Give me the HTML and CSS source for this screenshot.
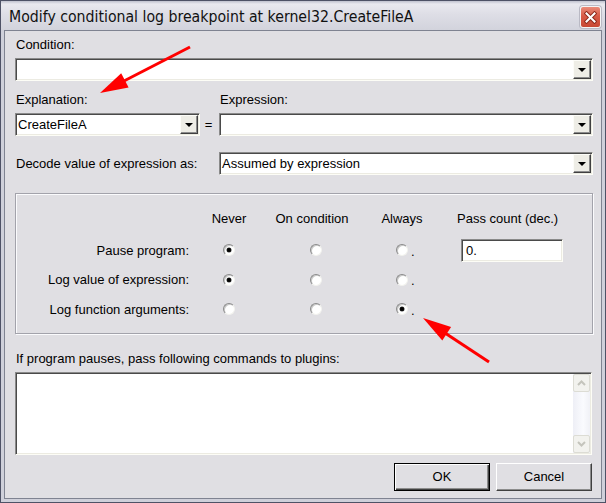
FILE: index.html
```html
<!DOCTYPE html>
<html>
<head>
<meta charset="utf-8">
<title>Modify conditional log breakpoint</title>
<link rel="stylesheet" href="styles.css">
</head>
<body>
<div class="window">
  <div class="titlebar">
    <span class="title">Modify conditional log breakpoint at kernel32.CreateFileA</span>
    <span class="close">
      <svg width="13" height="13" viewBox="0 0 13 13">
        <path d="M2.5 2.5 L10.5 10.5 M10.5 2.5 L2.5 10.5" stroke="#8c2a1c" stroke-width="4" stroke-linecap="square"/>
        <path d="M2.5 2.5 L10.5 10.5 M10.5 2.5 L2.5 10.5" stroke="#ffffff" stroke-width="2" stroke-linecap="square"/>
      </svg>
    </span>
  </div>
  <div class="client">
    <div class="label">Condition:</div>
    <div class="combo top-gap"><span class="val"></span><span class="dd"></span></div>

    <div class="pair">
      <div class="field">
        <div class="label">Explanation:</div>
        <div class="combo top-gap"><span class="val">CreateFileA</span><span class="dd"></span></div>
      </div>
      <div class="eq">=</div>
      <div class="field">
        <div class="label">Expression:</div>
        <div class="combo top-gap"><span class="val"></span><span class="dd"></span></div>
      </div>
    </div>

    <div class="decode">
      <div class="label">Decode value of expression as:</div>
      <div class="combo"><span class="val">Assumed by expression</span><span class="dd"></span></div>
    </div>

    <div class="group">
      <div class="grid">
        <div></div>
        <div class="head">Never</div>
        <div class="head">On condition</div>
        <div class="head">Always</div>
        <div class="head pass">Pass count (dec.)</div>

        <div class="rlabel">Pause program:</div>
        <div class="cell c-never"><span class="radio on"></span></div>
        <div class="cell c-cond"><span class="radio"></span></div>
        <div class="cell c-always"><span class="radio"></span><span class="dot">.</span></div>
        <div class="cell c-pass"><div class="input">0.</div></div>

        <div class="rlabel">Log value of expression:</div>
        <div class="cell c-never"><span class="radio on"></span></div>
        <div class="cell c-cond"><span class="radio"></span></div>
        <div class="cell c-always"><span class="radio"></span><span class="dot">.</span></div>
        <div></div>

        <div class="rlabel">Log function arguments:</div>
        <div class="cell c-never"><span class="radio"></span></div>
        <div class="cell c-cond"><span class="radio"></span></div>
        <div class="cell c-always"><span class="radio on"></span><span class="dot">.</span></div>
        <div></div>
      </div>
    </div>

    <div class="label plug">If program pauses, pass following commands to plugins:</div>
    <div class="textarea">
      <div class="text"></div>
      <div class="vscroll">
        <div class="sbtn"><svg width="9" height="6" viewBox="0 0 9 6"><path d="M1 5 L4.5 1.5 L8 5" fill="none" stroke="#c4c4bc" stroke-width="2"/></svg></div>
        <div class="track"></div>
        <div class="sbtn"><svg width="9" height="6" viewBox="0 0 9 6"><path d="M1 1 L4.5 4.5 L8 1" fill="none" stroke="#c4c4bc" stroke-width="2"/></svg></div>
      </div>
    </div>

    <div class="buttons">
      <div class="btn default">OK</div>
      <div class="btn">Cancel</div>
    </div>
  </div>

  <svg class="arrows" width="606" height="503" viewBox="0 0 606 503">
    <line x1="190" y1="47" x2="122" y2="82" stroke="#ff0000" stroke-width="3"/>
    <polygon points="100,93 128.6,87.5 121.2,73.3" fill="#ff0000"/>
    <line x1="489" y1="362" x2="445" y2="333" stroke="#ff0000" stroke-width="3"/>
    <polygon points="423,318 451.1,327 442.3,340.4" fill="#ff0000"/>
  </svg>
</div>
</body>
</html>
```

FILE: styles.css
```css
html, body {
  margin: 0;
  padding: 0;
  background: #ffffff;
}

.window {
  position: relative;
  width: 606px;
  height: 503px;
  box-sizing: border-box;
  border: 1px solid #4e5266;
  background: #cfd0da;
  padding: 0 3px 3px;
  display: flex;
  flex-direction: column;
  font-family: "Liberation Sans", Arial, sans-serif;
  font-size: 13px;
  color: #000;
  overflow: hidden;
}

.titlebar {
  height: 29px;
  margin: 0 -3px;
  padding: 0 4px 0 8px;
  display: flex;
  align-items: center;
  justify-content: space-between;
  background: linear-gradient(to bottom, #bfc1ce 0, #e9e9ef 3px, #dedee6 45%, #d2d3dc 100%);
}

.title {
  font-family: "DejaVu Sans Condensed", "DejaVu Sans", sans-serif;
  font-size: 15.7px;
  color: #111;
  padding-top: 2px;
}

.close {
  width: 21px;
  height: 22px;
  box-sizing: border-box;
  border: 1px solid #f4f4f4;
  border-radius: 3px;
  background: linear-gradient(to bottom, #ea8c7a 0, #d85a46 45%, #c84834 100%);
  display: flex;
  align-items: center;
  justify-content: center;
  margin-top: 3px;
  box-shadow: 0 0 0 1px #b9b9c4;
}

.client {
  flex: 1;
  border: 1px solid #7f8391;
  background: #e0dfe3;
  padding: 6px 8px 0 10px;
  display: flex;
  flex-direction: column;
}

.label {
  line-height: 15px;
  height: 15px;
  padding-left: 1px;
  white-space: nowrap;
}

.top-gap {
  margin-top: 6px;
}

.combo {
  height: 23px;
  box-sizing: border-box;
  border: 1px solid;
  border-color: #8a8a8a #fdfdf6 #fdfdf6 #8a8a8a;
  box-shadow: inset 1px 1px 0 #4a4a4a, inset -1px -1px 0 #ecebe2;
  padding: 1px;
  background: #fff;
  display: flex;
}

.val {
  flex: 1;
  line-height: 19px;
  padding-left: 1px;
  white-space: nowrap;
  overflow: hidden;
}

.dd {
  width: 18px;
  height: 19px;
  box-sizing: border-box;
  background: #eeede6;
  border: 1px solid;
  border-color: #fcfcf8 #404040 #404040 #fcfcf8;
  box-shadow: inset -1px -1px 0 #8c8c8c;
  display: flex;
  align-items: center;
  justify-content: center;
}

.dd::after {
  content: "";
  width: 0;
  height: 0;
  border-left: 4px solid transparent;
  border-right: 4px solid transparent;
  border-top: 4px solid #000;
  margin: 1px 1px 0 0;
}

.pair {
  margin-top: 11px;
  display: grid;
  grid-template-columns: 185px 19px 1fr;
}

.eq {
  align-self: end;
  height: 23px;
  line-height: 23px;
  text-align: center;
  padding-right: 2px;
}

.decode {
  margin-top: 16px;
  display: grid;
  grid-template-columns: 204px 1fr;
  align-items: center;
}

.group {
  margin-top: 18px;
  height: 141px;
  box-sizing: border-box;
  border: 1px solid #a3a3ab;
  box-shadow: inset 1px 1px 0 #fbfbfd, 1px 1px 0 #fbfbfd;
  padding: 7px 0 9px;
}

.grid {
  display: grid;
  grid-template-columns: 173px 80px 86px 94px 1fr;
  grid-template-rows: 34px 30px 29px 30px;
  align-items: center;
}

.head {
  text-align: center;
  white-space: nowrap;
}

.head.pass {
  text-align: left;
  padding-left: 8px;
}

.rlabel {
  text-align: right;
  white-space: nowrap;
}

.cell {
  display: flex;
  align-items: center;
}

.c-never {
  justify-content: center;
}

.c-cond {
  justify-content: center;
  padding-left: 8px;
}

.c-always {
  padding-left: 41px;
}

.c-pass {
  padding-left: 12px;
}

.radio {
  display: block;
  position: relative;
  width: 12px;
  height: 12px;
  box-sizing: border-box;
  border-radius: 50%;
  border: 1px solid;
  border-color: #8a8a8a #f2f2ee #f2f2ee #8a8a8a;
  background: #fff;
  box-shadow: inset 1px 1px 0 #c8c8c8;
}

.radio.on::after {
  content: "";
  position: absolute;
  left: 3px;
  top: 3px;
  width: 4px;
  height: 4px;
  border-radius: 50%;
  background: #000;
  box-shadow: 0 0 0 0.5px #333;
}

.dot {
  margin-left: 3px;
  line-height: 12px;
  padding-top: 3px;
}

.input {
  width: 102px;
  height: 23px;
  box-sizing: border-box;
  border: 1px solid;
  border-color: #8a8a8a #fdfdf6 #fdfdf6 #8a8a8a;
  box-shadow: inset 1px 1px 0 #4a4a4a, inset -1px -1px 0 #ecebe2;
  background: #fff;
  line-height: 21px;
  padding-left: 4px;
}

.plug {
  margin-top: 17px;
}

.textarea {
  margin-top: 6px;
  margin-right: 1px;
  height: 83px;
  box-sizing: border-box;
  border: 1px solid;
  border-color: #8a8a8a #fdfdf6 #fdfdf6 #8a8a8a;
  box-shadow: inset 1px 1px 0 #4a4a4a, inset -1px -1px 0 #ecebe2;
  padding: 1px;
  background: #fff;
  display: flex;
}

.text {
  flex: 1;
}

.vscroll {
  width: 17px;
  display: flex;
  flex-direction: column;
  background: linear-gradient(to right, #eeeff6, #fafbfe 60%, #f0f1f6);
}

.sbtn {
  height: 18px;
  box-sizing: border-box;
  border: 1px solid #dcdcd4;
  border-radius: 2px;
  background: #f2f2ee;
  display: flex;
  align-items: center;
  justify-content: center;
}

.track {
  flex: 1;
}

.buttons {
  margin-top: 8px;
  display: flex;
  justify-content: flex-end;
  gap: 6px;
  padding-right: 1px;
}

.btn {
  width: 96px;
  height: 28px;
  box-sizing: border-box;
  border: 1px solid;
  border-color: #ffffff #404040 #404040 #ffffff;
  box-shadow: inset -1px -1px 0 #8c8c8c;
  background: #e0dfe3;
  text-align: center;
  line-height: 26px;
}

.btn.default {
  border: 1px solid #000;
  box-shadow: inset 1px 1px 0 #ffffff, inset -1px -1px 0 #404040, inset -2px -2px 0 #8c8c8c;
}

.arrows {
  position: absolute;
  left: -1px;
  top: -1px;
  pointer-events: none;
}
```
